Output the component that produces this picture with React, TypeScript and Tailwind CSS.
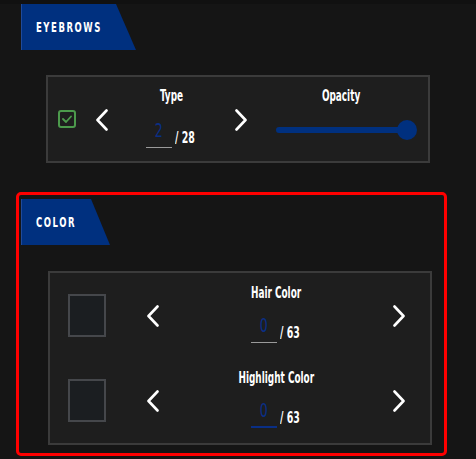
import React from "react";

const font = { fontFamily: "'DejaVu Sans Condensed', 'Liberation Sans', sans-serif" };

function ChevLeft() {
  return (
    <svg width="14" height="22" viewBox="0 0 14 22" fill="none">
      <path d="M11.5 1.5 L2.5 11 L11.5 20.5" stroke="white" strokeWidth="2.6" strokeLinecap="round" strokeLinejoin="round" />
    </svg>
  );
}
function ChevRight() {
  return (
    <svg width="14" height="22" viewBox="0 0 14 22" fill="none">
      <path d="M2.5 1.5 L11.5 11 L2.5 20.5" stroke="white" strokeWidth="2.6" strokeLinecap="round" strokeLinejoin="round" />
    </svg>
  );
}

function Tab({ label, cls }: { label: string; cls: string }) {
  return (
    <div className={`h-[46px] bg-[#00307f] border-l border-[#1f4a9a] flex items-center pl-[14px] ${cls}`}>
      <span className="inline-block origin-left scale-x-[0.7] text-white text-[13.5px] font-bold tracking-[2.2px] whitespace-nowrap">{label}</span>
    </div>
  );
}

function Label({ text }: { text: string }) {
  return (
    <span className="inline-block scale-x-[0.66] text-white text-[15px] font-bold leading-[18px] whitespace-nowrap">{text}</span>
  );
}

function Value({ v, total, blueLine }: { v: string; total: string; blueLine?: boolean }) {
  return (
    <div className="flex items-end">
      <div className={`w-[26px] h-[30px] flex items-start justify-center ${blueLine ? "border-b-[2px] border-[#0a2f86]" : "border-b border-[#9a9a9a]"}`}>
        <span className="inline-block scale-x-[0.7] text-[#0a2f86] text-[20px] leading-[24px]">{v}</span>
      </div>
      <div className="w-[24px] ml-[3px] mb-[4px] h-[18px]">
        <span className="inline-block origin-left scale-x-[0.7] text-white text-[15px] font-bold leading-[18px] whitespace-nowrap">/ {total}</span>
      </div>
    </div>
  );
}

function Swatch() {
  return <div className="w-[38px] h-[43px] bg-[#1b1e21] border-2 border-[#45474b]" />;
}

export default function App() {
  return (
    <div className="w-[476px] h-[459px] bg-[#151515] overflow-hidden" style={font}>
      <div className="h-[4px] bg-[#111111]" />
      <div className="pl-[21px]">
        <Tab label="EYEBROWS" cls="w-[115px] [clip-path:polygon(0_0,95px_0,115px_100%,0_100%)]" />
      </div>
      <div className="ml-[46px] mt-[25px] w-[384px] h-[88px] bg-[#1e1e1e] border-2 border-[#3b3b3b] flex items-center">
        <div className="ml-[10px] w-[18px] h-[18px] border-2 border-[#4c9a4c] rounded-[3px] flex items-center justify-center">
          <svg width="10" height="8" viewBox="0 0 10 8" fill="none">
            <path d="M1 4 L4 7 L9 1.5" stroke="#4c9a4c" strokeWidth="1.8" strokeLinecap="round" strokeLinejoin="round" />
          </svg>
        </div>
        <div className="ml-[19px] mt-[1px]"><ChevLeft /></div>
        <div className="w-[125px] flex flex-col items-center self-stretch pt-[10px]">
          <Label text="Type" />
          <div className="mt-[13px] ml-[2px]"><Value v="2" total="28" /></div>
        </div>
        <div className="mt-[1px]"><ChevRight /></div>
        <div className="ml-[28px] w-[143px] flex flex-col self-stretch pt-[10px]">
          <div className="flex justify-center pr-[13px]"><Label text="Opacity" /></div>
          <div className="relative mt-[15px] h-[20px] flex items-center">
            <div className="h-[6px] w-[132px] bg-[#00307f] rounded-full" />
            <div className="absolute left-[121px] top-0 w-[20px] h-[20px] rounded-full bg-[#00307f]" />
          </div>
        </div>
      </div>

      <div className="ml-[16px] mt-[29px] w-[431px] h-[264px] border-[3px] border-[#ff0000] rounded-[5px] pl-[2px] pt-[4px]">
        <Tab label="COLOR" cls="w-[89px] [clip-path:polygon(0_0,70px_0,89px_100%,0_100%)]" />
        <div className="ml-[27px] mt-[26px] w-[384px] h-[174px] bg-[#1e1e1e] border-2 border-[#3b3b3b] flex flex-col pt-[21px] gap-[42px]">
          {[
            { label: "Hair Color", blue: false },
            { label: "Highlight Color", blue: true },
          ].map((r) => (
            <div key={r.label} className="flex items-center h-[43px]">
              <div className="ml-[18px]"><Swatch /></div>
              <div className="ml-[40px]"><ChevLeft /></div>
              <div className="w-[232px] h-[43px] relative flex flex-col items-center">
                <div className="absolute top-[-10px] left-0 right-0 flex justify-center"><Label text={r.label} /></div>
                <div className="absolute top-[19px] left-0 right-0 flex justify-center pl-[3px]">
                  <Value v="0" total="63" blueLine={r.blue} />
                </div>
              </div>
              <div><ChevRight /></div>
            </div>
          ))}
        </div>
      </div>
    </div>
  );
}
